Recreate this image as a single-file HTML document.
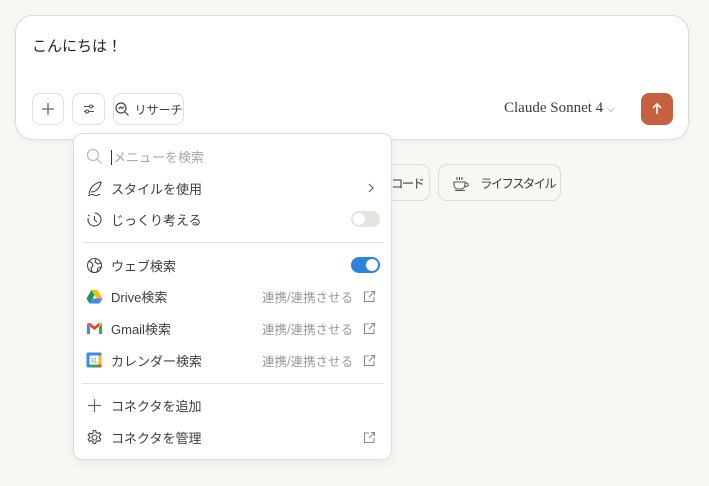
<!DOCTYPE html>
<html><head><meta charset="utf-8"><style>
*{box-sizing:border-box;margin:0;padding:0}
body{width:709px;height:486px;background:#f8f7f4;font-family:"Liberation Sans","Noto Sans CJK JP",sans-serif;position:relative;overflow:hidden;color:#3d3d3a}
.box{position:absolute;left:15px;top:15px;width:674px;height:125px;background:#fff;border:1px solid #dedcd4;border-radius:18px;box-shadow:0 2px 6px rgba(0,0,0,.04)}
.txt{position:absolute;left:16px;top:19px;font-size:15px;color:#222}
.btn{position:absolute;top:77px;height:32px;border:1px solid #e2e0d8;border-radius:8px;background:#fff;display:flex;align-items:center;justify-content:center;font-size:12px;color:#3d3d3a;white-space:nowrap}
.model{position:absolute;left:488px;top:84px;font-family:"Liberation Serif",serif;font-size:15px;color:#3d3d3a;white-space:nowrap}
.send{position:absolute;left:625px;top:77px;width:32px;height:32px;border-radius:8px;background:#c6613f;display:flex;align-items:center;justify-content:center}
.chip{position:absolute;top:164px;height:37px;border:1px solid #dedcd4;border-radius:9px;background:#f8f7f4;font-size:12.5px;letter-spacing:-1.8px;display:flex;align-items:center;white-space:nowrap}
.menu{position:absolute;left:73px;top:133px;width:319px;height:327px;background:#fff;border:1px solid #dedcd4;border-radius:9px;box-shadow:0 3px 10px rgba(0,0,0,.06)}
.row{position:absolute;left:0;width:317px;height:28px;display:flex;align-items:center;font-size:13px;color:#3d3d3a;white-space:nowrap}
.ic{position:absolute;left:11px;width:18px;height:18px;display:flex;align-items:center;justify-content:center}
.lb{position:absolute;left:37px}
.rt{position:absolute;left:188px;color:#9a9893;font-size:12.5px}
.ext{position:absolute;left:289px}
.hr{position:absolute;left:8px;width:302px;height:1px;background:#e2e0da}
.tog{position:absolute;left:277px;width:29px;height:16px;border-radius:8px}
.tog i{position:absolute;top:2px;width:12px;height:12px;border-radius:6px;background:#fff}
</style></head><body>
<div class="box">
<div class="txt">こんにちは！</div>
<div class="btn" style="left:16px;width:32px"><svg width="16" height="16" viewBox="0 0 16 16"><path d="M8 2v12M2 8h12" stroke="#666" stroke-width="1.3"/></svg></div>
<div class="btn" style="left:56px;width:33px"><svg width="16" height="16" viewBox="0 0 16 16" fill="none" stroke="#555" stroke-width="1.1"><path d="M3 5.5h10M3 10.5h10"/><circle cx="10" cy="5.5" r="1.5" fill="#fff"/><circle cx="6" cy="10.5" r="1.5" fill="#fff"/></svg></div>
<div class="btn" style="left:97px;width:71px"><svg width="16" height="16" viewBox="0 0 16 16" fill="none" stroke="#444" stroke-width="1.2" style="margin-right:4px"><circle cx="7" cy="7" r="5"/><path d="M11 11l3.5 3.5M4.5 8l2-2 1.5 1.5 2-2"/></svg>リサーチ</div>
<div class="model">Claude Sonnet 4 <span style="font-size:10px;font-family:'DejaVu Sans';color:#777">⌵</span></div>
<div class="send"><svg width="14" height="14" viewBox="0 0 14 14" fill="none" stroke="#fff" stroke-width="1.6"><path d="M7 12V2M3 6l4-4 4 4"/></svg></div>
</div>
<div class="chip" style="left:360px;width:70px;padding-left:30px">コード</div>
<div class="chip" style="left:438px;width:123px;padding-left:41px"><svg style="position:absolute;left:13px;top:9px" width="18" height="18" viewBox="0 0 18 18" fill="none" stroke="#555" stroke-width="1.1"><path d="M2 8h11v3a4 4 0 0 1-4 4H6a4 4 0 0 1-4-4zM13 9h1.5a1.7 1.7 0 0 1 0 3.4H13M5 3v3M7.5 3v3M10 3v3M3 16.5h10"/></svg>ライフスタイル</div>
<div class="menu">
<div class="row" style="top:8px"><div class="ic"><svg width="17" height="17" viewBox="0 0 17 17" fill="none" stroke="#bbb" stroke-width="1.2"><circle cx="7" cy="7" r="5.5"/><path d="M11 11l4.5 4.5"/></svg></div><span class="lb" style="color:#a9a7a1"><span style="border-left:1px solid #333;margin-right:1px"></span>メニューを検索</span></div>
<div class="row" style="top:40px"><div class="ic"><svg width="17" height="17" viewBox="0 0 17 17" fill="none" stroke="#444" stroke-width="1.1"><path d="M3 14c1-6 5-11 12-12-1 6-5 10-10 10M2 15.5c2 0 2-1 4-1s2 1 4 1 2-1 4-1"/></svg></div><span class="lb">スタイルを使用</span><svg style="position:absolute;left:292px" width="10" height="12" viewBox="0 0 10 12" fill="none" stroke="#666" stroke-width="1.2"><path d="M3 2l4 4-4 4"/></svg></div>
<div class="row" style="top:71px"><div class="ic"><svg width="17" height="17" viewBox="0 0 17 17" fill="none" stroke="#444" stroke-width="1.1"><path d="M8.5 2a6.5 6.5 0 1 1-6.3 5" /><path d="M8.5 5v4l2.5 2M2 4l1.5 1"/></svg></div><span class="lb">じっくり考える</span><div class="tog" style="background:#e6e4de"><i style="left:2px"></i></div></div>
<div class="hr" style="top:108px"></div>
<div class="row" style="top:117px"><div class="ic"><svg width="17" height="17" viewBox="0 0 17 17" fill="none" stroke="#444" stroke-width="1.1"><circle cx="8.5" cy="8.5" r="7"/><path d="M3 4l3 2 1 3-2 2 1 4M10 2l-1 3 3 2 3-1M11 15l1-4 3-1"/></svg></div><span class="lb">ウェブ検索</span><div class="tog" style="background:#2c84db"><i style="left:15px"></i></div></div>
<div class="row" style="top:148px"><div class="ic"><svg width="17" height="15" viewBox="0 0 17 15"><path d="M5.5 1h6l5 8.5h-6z" fill="#fbbc04"/><path d="M5.5 1l-5 8.5 3 5 5-8.5z" fill="#0f9d58"/><path d="M3.5 14.5h10l3-5h-10z" fill="#4285f4"/></svg></div><span class="lb">Drive検索</span><span class="rt">連携/連携させる</span><svg class="ext" width="13" height="13" viewBox="0 0 13 13" fill="none" stroke="#888" stroke-width="1.1"><path d="M6 2H1.5v9.5H11V7M8 1.5h3.5V5M11.5 1.5L6 7"/></svg></div>
<div class="row" style="top:180px"><div class="ic"><svg width="17" height="13" viewBox="0 0 17 13"><path d="M1 2v10h3V5z" fill="#4285f4"/><path d="M13 5v7h3V2z" fill="#34a853"/><path d="M1 2l7.5 6L16 2v-.5L13 1 8.5 4.5 4 1 1 1.5z" fill="#ea4335"/><path d="M13 1l3 1V2l-3 3z" fill="#fbbc04"/></svg></div><span class="lb">Gmail検索</span><span class="rt">連携/連携させる</span><svg class="ext" width="13" height="13" viewBox="0 0 13 13" fill="none" stroke="#888" stroke-width="1.1"><path d="M6 2H1.5v9.5H11V7M8 1.5h3.5V5M11.5 1.5L6 7"/></svg></div>
<div class="row" style="top:212px"><div class="ic"><svg width="16" height="16" viewBox="0 0 16 16"><rect x="0.5" y="0.5" width="15" height="15" rx="1.5" fill="#4285f4"/><rect x="3.5" y="3.5" width="9" height="9" fill="#fff"/><path d="M12.5 12.5h3v1.5a1.5 1.5 0 0 1-1.5 1.5h-1.5z" fill="#ea4335"/><path d="M3.5 12.5h9v3h-9z" fill="#34a853"/><path d="M12.5 3.5h3v9h-3z" fill="#fbbc04"/><text x="8" y="10.5" font-size="6" text-anchor="middle" fill="#4285f4" font-family="Liberation Sans">31</text></svg></div><span class="lb">カレンダー検索</span><span class="rt">連携/連携させる</span><svg class="ext" width="13" height="13" viewBox="0 0 13 13" fill="none" stroke="#888" stroke-width="1.1"><path d="M6 2H1.5v9.5H11V7M8 1.5h3.5V5M11.5 1.5L6 7"/></svg></div>
<div class="hr" style="top:249px"></div>
<div class="row" style="top:257px"><div class="ic"><svg width="15" height="15" viewBox="0 0 15 15"><path d="M7.5 1v13M1 7.5h13" stroke="#666" stroke-width="1.2"/></svg></div><span class="lb">コネクタを追加</span></div>
<div class="row" style="top:289px"><div class="ic"><svg width="17" height="17" viewBox="0 0 17 17" fill="none" stroke="#444" stroke-width="1.1"><circle cx="8.5" cy="8.5" r="2.5"/><path d="M7.3 1.5h2.4l.4 2 1.6.9 1.9-.7 1.2 2.1-1.5 1.3v1.8l1.5 1.3-1.2 2.1-1.9-.7-1.6.9-.4 2H7.3l-.4-2-1.6-.9-1.9.7-1.2-2.1 1.5-1.3V7.6L2.2 6.3l1.2-2.1 1.9.7 1.6-.9z"/></svg></div><span class="lb">コネクタを管理</span><svg class="ext" width="13" height="13" viewBox="0 0 13 13" fill="none" stroke="#888" stroke-width="1.1"><path d="M6 2H1.5v9.5H11V7M8 1.5h3.5V5M11.5 1.5L6 7"/></svg></div>
</div>
</body></html>
